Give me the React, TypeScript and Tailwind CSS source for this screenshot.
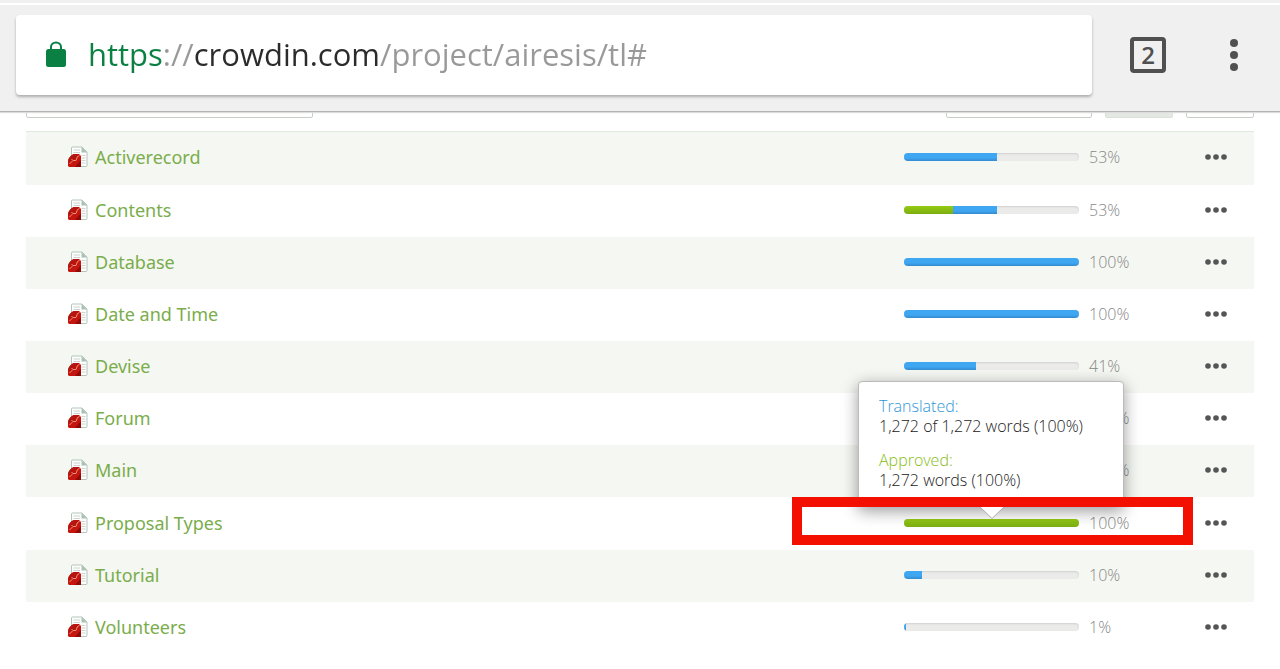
import React from 'react';

interface FileRow {
  name: string;
  translated: number;
  approved: number;
  label: string;
}

const files: FileRow[] = [
  { name: 'Activerecord', translated: 53, approved: 0, label: '53%' },
  { name: 'Contents', translated: 53, approved: 28, label: '53%' },
  { name: 'Database', translated: 100, approved: 0, label: '100%' },
  { name: 'Date and Time', translated: 100, approved: 0, label: '100%' },
  { name: 'Devise', translated: 41, approved: 0, label: '41%' },
  { name: 'Forum', translated: 100, approved: 0, label: '100%' },
  { name: 'Main', translated: 100, approved: 0, label: '100%' },
  { name: 'Proposal Types', translated: 100, approved: 100, label: '100%' },
  { name: 'Tutorial', translated: 10, approved: 0, label: '10%' },
  { name: 'Volunteers', translated: 1, approved: 0, label: '1%' },
];

const LockIcon = () => (
  <svg className="w-5 h-7 shrink-0" viewBox="0 0 20 28" aria-hidden="true">
    <path d="M5 11V6a5 4.500 0 0 1 10 0v5" fill="none" stroke="#0b8043" strokeWidth="2" />
    <rect x="0" y="8" width="20" height="18" rx="2.5" fill="#0b8043" />
  </svg>
);

const RubyFileIcon = () => (
  <svg className="w-5 h-[22px] shrink-0" viewBox="0 0 20 22" aria-hidden="true">
    <path d="M4.500 1H14l5 5v13.500a1 1 0 0 1-1 1H4.500a1 1 0 0 1-1-1V2a1 1 0 0 1 1-1z" fill="#fdfefd" stroke="#b3c6ba" />
    <path d="M13.500 1v5.500H19z" fill="#a9c2b2" />
    <path d="M5.500 4h6.500M5.500 6.500h6.500M13.500 9.500h4M13.500 12h4M13.500 14.500h4M13.500 17h4" stroke="#cdd3cf" />
    <path d="M0 20V14.500c1-3 3.500-6 6.500-6.500l4.500 0 2 2v11H1z" fill="#c4150f" />
    <path d="M7 21l6-7v7z" fill="#920a08" />
    <path d="M0 14.500c1-3 3.500-6 6.500-6.500l4.500 0-3 5-5 4z" fill="#b5150f" />
    <path d="M1.500 18l3.500-3.500 3 0 1.500-4 2-1M5 14.500l-1.500-1.500" fill="none" stroke="#f0907c" />
  </svg>
);

const ProgressBar = ({ file }: { file: FileRow }) => (
  <div
    role="progressbar"
    aria-label={file.name}
    aria-valuenow={file.translated}
    className="flex w-[175px] h-2 shrink-0 rounded overflow-hidden bg-[#ebebea] shadow-[inset_0_1px_2px_#d0d0d0]"
  >
    <div className="h-full bg-linear-to-b from-[#94cb14] to-[#7cad10]" style={{ width: `${file.approved}%` }} />
    <div
      className="h-full bg-linear-to-b from-[#3fa6f2] from-60% to-[#348bd0]"
      style={{ width: `${file.translated - file.approved}%` }}
    />
  </div>
);

const WordsTooltip = () => (
  <div
    role="tooltip"
    className="absolute z-10 -left-[46px] bottom-[28px] w-[266px] h-[126px] px-5 pt-[14px] rounded border border-[#bbb] bg-white text-base leading-5 font-[350] text-[#222] shadow-[0_4px_16px_rgba(0,0,0,0.4)]"
  >
    <p className="text-[#3097d8]">Translated:</p>
    <p>1,272 of 1,272 words (100%)</p>
    <p className="mt-[14px] text-[#88bd12]">Approved:</p>
    <p>1,272 words (100%)</p>
  </div>
);

const Highlight = () => (
  <>
    <div className="absolute z-20 -left-28 -right-[15px] -top-[14px] -bottom-[10px] border-10 border-[#f41000]" />
    <svg className="absolute z-30 left-[76px] -top-1 w-6 h-3" viewBox="0 0 24 12" aria-hidden="true">
      <path d="M0 0l12 11.500L24 0z" fill="#fff" />
      <path d="M0 0l12 11.500L24 0" fill="none" stroke="#aaa" />
    </svg>
  </>
);

const BrowserBar = () => (
  <header className="relative z-40 h-[112px] pt-[3px] bg-[#f0f0f0] border-b border-[#b4b4b4] shadow-[0_1px_1px_#ddd]">
    <div className="flex items-center h-[102px] pl-4 pr-9 border-t-2 border-white">
      <div className="flex flex-1 items-center h-20 pl-[30px] rounded bg-white shadow-[0_2px_3px_rgba(0,0,0,0.28)]">
        <LockIcon />
        <input
          type="text"
          aria-label="Address"
          defaultValue="https://crowdin.com/project/airesis/tl#"
          className="flex-1 min-w-0 h-12 ml-[22px] pb-[2px] text-[31px] text-transparent bg-clip-text bg-[linear-gradient(90deg,#0b8043_74px,#999_74px,#999_106px,#2b2b2b_106px,#2b2b2b_290px,#999_290px)] outline-none"
        />
      </div>
      <button
        type="button"
        aria-label="Open tabs"
        className="ml-[38px] w-9 h-9 flex items-center justify-center rounded border-4 border-[#505050] text-2xl leading-6 font-semibold text-[#505050]"
      >
        2
      </button>
      <button type="button" aria-label="Menu" className="ml-[58px] w-5 h-10 flex items-center justify-center">
        <svg className="w-2 h-8" viewBox="0 0 8 32" fill="#505050">
          <circle cx="4" cy="4" r="4" />
          <circle cx="4" cy="16" r="4" />
          <circle cx="4" cy="28" r="4" />
        </svg>
      </button>
    </div>
  </header>
);

const Toolbar = () => (
  <div className="flex items-end h-[6px] overflow-hidden">
    <input type="search" aria-label="Search files" className="w-[287px] h-9 rounded-xs border border-[#c5cfc6]" />
    <button type="button" aria-label="Filter" className="ml-auto w-[146px] h-9 rounded-xs border border-[#c5cfc6]" />
    <button type="button" aria-label="List view" className="ml-[13px] w-[68px] h-9 rounded-xs border border-[#dbe0da] bg-[#e5e9e4]" />
    <button type="button" aria-label="Tree view" className="ml-[13px] w-[68px] h-9 rounded-xs border border-[#c5cfc6]" />
  </div>
);

const App: React.FC = () => {
  return (
    <div className="min-h-screen bg-white font-['Open_Sans',sans-serif]">
      <BrowserBar />
      <main className="px-[26px] pb-4">
        <Toolbar />
        <table className="w-full h-[523px] mt-[13px] border-collapse">
          <tbody>
            {files.map((file) => (
              <tr key={file.name} className="odd:bg-[#f5f7f2] first:border-t first:border-[#e1e9df]">
                <td className="p-0 pb-[2px] pl-[42px]">
                  <div className="flex items-center gap-[7px]">
                    <RubyFileIcon />
                    <a href="#" className="font-['Noto_Sans',sans-serif] text-[18px] leading-6 text-[#7aad4b]">
                      {file.name}
                    </a>
                  </div>
                </td>
                <td className="p-0 pb-[2px] w-[274px]">
                  <div className="relative flex items-center gap-[10px] h-6">
                    <ProgressBar file={file} />
                    <span className="text-base leading-6 font-light text-[#888]">{file.label}</span>
                    {file.name === 'Proposal Types' && (
                      <>
                        <WordsTooltip />
                        <Highlight />
                      </>
                    )}
                  </div>
                </td>
                <td className="p-0 pb-[2px] w-[76px]">
                  <button
                    type="button"
                    aria-label={`${file.name} actions`}
                    className="flex w-full h-6 items-center justify-center"
                  >
                    <svg className="w-[22px] h-[6px]" viewBox="0 0 22 6" fill="#555">
                      <circle cx="3" cy="3" r="2.800" />
                      <circle cx="11" cy="3" r="2.800" />
                      <circle cx="19" cy="3" r="2.800" />
                    </svg>
                  </button>
                </td>
              </tr>
            ))}
          </tbody>
        </table>
      </main>
    </div>
  );
};

export default App;
